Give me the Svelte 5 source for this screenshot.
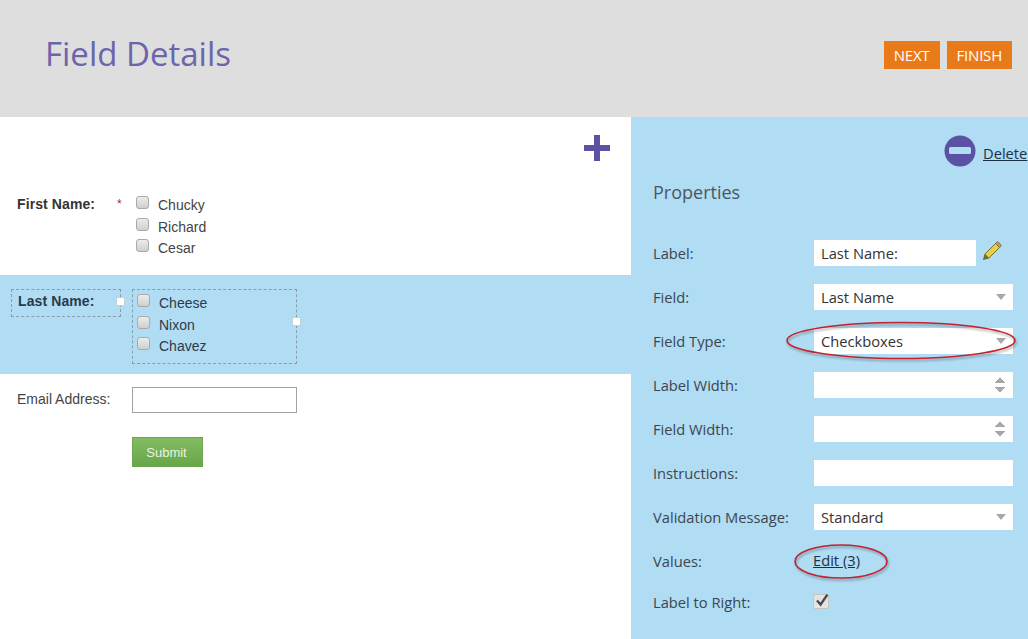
<script>
  const firstNames = ["Chucky", "Richard", "Cesar"];
  const lastNames = ["Cheese", "Nixon", "Chavez"];
</script>

<div class="page">
  <header class="top">
    <h1>Field Details</h1>
    <div class="actions">
      <button class="orange">NEXT</button>
      <button class="orange">FINISH</button>
    </div>
  </header>

  <div class="main">
    <section class="canvas">
      <div class="tools">
        <svg width="26" height="26" viewBox="0 0 26 26"><path d="M10 0h6v10h10v6H16v10h-6V16H0v-6h10z" fill="#5b52a3" /></svg>
      </div>

      <div class="row first">
        <div class="lbl bold">First Name:</div>
        <div class="req">*</div>
        <div class="opts">
          {#each firstNames as n}
            <div class="opt"><span class="cb"></span><span>{n}</span></div>
          {/each}
        </div>
      </div>

      <div class="row selected">
        <div class="lbl-box bold">Last Name:<span class="handle h-label"></span></div>
        <div class="opts-box">
          {#each lastNames as n}
            <div class="opt"><span class="cb"></span><span>{n}</span></div>
          {/each}
          <span class="handle h-field"></span>
        </div>
      </div>

      <div class="row email">
        <div class="lbl">Email Address:</div>
        <div class="email-input"></div>
      </div>

      <div class="submit-row">
        <button class="submit">Submit</button>
      </div>
    </section>

    <aside class="props">
      <div class="del">
        <svg width="32" height="32" viewBox="0 0 32 32"><circle cx="16" cy="16" r="15.5" fill="#5b52a3" /><rect x="5" y="12" width="22" height="7" rx="1.5" fill="#b0dcf4" /></svg>
        <a href="#del">Delete</a>
      </div>
      <h2>Properties</h2>

      <div class="form">
        <div class="prop">
          <span class="name">Label:</span>
          <div class="box short">Last Name:</div>
          <svg class="pencil" width="20" height="20" viewBox="0 0 20 20">
            <path d="M1.5 18.5l1.6-5.6L13.6 2.4l4 4L7.1 16.9z" fill="#e8cf4a" stroke="#77702c" stroke-width="1" />
            <path d="M13.6 2.4l1.3-1.2c.5-.4 1-.4 1.4 0l2.5 2.5c.4.4.4.9 0 1.4l-1.2 1.3z" fill="#e58f8a" stroke="#77702c" stroke-width="1" />
            <path d="M1.5 18.5l1.6-5.6 4 4z" fill="#6b6a3c" />
          </svg>
        </div>
        <div class="prop">
          <span class="name">Field:</span>
          <div class="box wide">Last Name<span class="caret"></span></div>
        </div>
        <div class="prop">
          <span class="name">Field Type:</span>
          <div class="box wide">Checkboxes<span class="caret"></span></div>
        </div>
        <div class="prop">
          <span class="name">Label Width:</span>
          <div class="box wide"><span class="spin"></span></div>
        </div>
        <div class="prop">
          <span class="name">Field Width:</span>
          <div class="box wide"><span class="spin"></span></div>
        </div>
        <div class="prop">
          <span class="name">Instructions:</span>
          <div class="box wide"></div>
        </div>
        <div class="prop">
          <span class="name">Validation Message:</span>
          <div class="box wide">Standard<span class="caret"></span></div>
        </div>
        <div class="prop">
          <span class="name">Values:</span>
          <a class="edit" href="#edit">Edit (3)</a>
        </div>
        <div class="prop last">
          <span class="name">Label to Right:</span>
          <span class="check">
            <svg width="16" height="16" viewBox="0 0 16 16"><path d="M3 7.500l3.600 4L13.400 1.600" fill="none" stroke="#4a4a4a" stroke-width="2.400" /></svg>
          </span>
        </div>
      </div>

      <!-- red hand drawn rings -->
      <svg class="rings" width="397" height="522" viewBox="0 0 397 522">
        <g fill="none" stroke="#c4222f" stroke-width="1.600">
          <ellipse cx="270" cy="223.500" rx="114" ry="18" class="ring" />
          <ellipse cx="210" cy="444.500" rx="46" ry="16.500" class="ring" />
        </g>
      </svg>
    </aside>
  </div>
</div>

<style>
  :global(body) {
    margin: 0;
    background: #fff;
  }
  .page {
    width: 1028px;
    height: 639px;
    overflow: hidden;
    font-family: "Liberation Sans", Arial, sans-serif;
  }
  .top {
    height: 117px;
    box-sizing: border-box;
    background: #dedede;
    display: flex;
    justify-content: space-between;
    padding: 32px 16px 0 45px;
  }
  h1 {
    margin: 0;
    font: 400 33px/44px "Open Sans", sans-serif;
    color: #6b66ac;
  }
  .actions {
    display: flex;
    gap: 7px;
    padding-top: 9px;
  }
  .orange {
    height: 28px;
    padding: 0 10px;
    border: 0;
    background: #e97a1a;
    color: #fff;
    font: 400 15px "Open Sans", sans-serif;
    letter-spacing: -0.2px;
  }
  .main {
    display: flex;
    height: 522px;
  }
  .canvas {
    width: 631px;
    color: #444;
    font-size: 14px;
  }
  .tools {
    display: flex;
    justify-content: flex-end;
    padding: 18px 21px 0 0;
    height: 44px;
  }
  .row {
    display: flex;
  }
  .first {
    height: 97px;
    padding: 16px 0 0 17px;
    box-sizing: border-box;
  }
  .lbl {
    line-height: 18px;
  }
  .bold {
    font-weight: 700;
    color: #333;
    letter-spacing: 0.1px;
  }
  .first .lbl {
    width: 100px;
  }
  .req {
    width: 19px;
    color: #a03030;
    font-size: 12px;
    line-height: 18px;
  }
  .opts {
    margin-top: -1px;
  }
  .opt {
    display: flex;
    height: 21.500px;
    align-items: flex-start;
    gap: 9px;
    line-height: 22px;
  }
  .cb {
    width: 11px;
    height: 11px;
    margin-top: 2px;
    border: 1px solid #aaa;
    border-radius: 3px;
    background: linear-gradient(#ececec, #cfcfcf);
  }
  .selected {
    height: 99px;
    margin-top: -1px;
    background: #b0dcf4;
    padding: 14px 0 0 11px;
    box-sizing: border-box;
    color: #2e3a4a;
  }
  .lbl-box {
    position: relative;
    width: 110px;
    height: 28px;
    border: 1px dashed #8b9cab;
    box-sizing: border-box;
    padding: 2px 0 0 6px;
    line-height: 18px;
    color: #2a3a4c;
  }
  .opts-box {
    position: relative;
    width: 165px;
    height: 75px;
    margin-left: 11px;
    border: 1px dashed #8b9cab;
    box-sizing: border-box;
    padding: 2px 0 0 4px;
  }
  .handle {
    position: absolute;
    width: 7px;
    height: 7px;
    background: #fff;
    border: 1px solid #c4d2dc;
  }
  .h-label {
    right: -5px;
    top: 7px;
  }
  .h-field {
    right: -5px;
    top: 27px;
  }
  .email {
    padding: 13px 0 0 17px;
  }
  .email .lbl {
    width: 115px;
    line-height: 24px;
  }
  .email-input {
    width: 165px;
    height: 26px;
    box-sizing: border-box;
    border: 1px solid #a3a3a3;
    background: #fff;
  }
  .submit-row {
    padding: 24px 0 0 132px;
  }
  .submit {
    width: 71px;
    height: 30px;
    border: 1px solid #6ea550;
    background: linear-gradient(#82bd62, #69a549);
    color: #e8f4e0;
    font: 13px "Liberation Sans", Arial, sans-serif;
    padding: 0 2px 0 0;
  }
  .props {
    position: relative;
    flex: 1;
    background: #b0dcf4;
    font-family: "Open Sans", sans-serif;
    font-size: 14.700px;
    color: #3d4650;
  }
  .del {
    display: flex;
    align-items: center;
    gap: 7px;
    padding: 18px 0 0 313px;
    white-space: nowrap;
  }
  .del a,
  .edit {
    color: #1d3144;
    text-decoration: underline;
  }
  .del a {
    padding-top: 4px;
  }
  h2 {
    margin: 0;
    padding: 12px 0 0 22px;
    font: 400 18px/26px "Open Sans", sans-serif;
    color: #4d5660;
  }
  .form {
    display: flex;
    flex-direction: column;
    gap: 18px;
    padding: 35px 0 0 22px;
  }
  .prop {
    display: flex;
    align-items: center;
    height: 26px;
  }
  .last {
    margin-top: -3px;
  }
  .name {
    width: 161px;
    flex: none;
  }
  .box {
    position: relative;
    height: 26px;
    background: #fff;
    box-sizing: border-box;
    padding-left: 7px;
    line-height: 26px;
    color: #333;
  }
  .short {
    width: 162px;
  }
  .wide {
    width: 199px;
  }
  .pencil {
    margin: -4px 0 0 6px;
  }
  .caret {
    position: absolute;
    right: 7px;
    top: 10px;
    border-left: 5px solid transparent;
    border-right: 5px solid transparent;
    border-top: 6px solid #a8a8a8;
  }
  .spin {
    position: absolute;
    right: 8px;
    top: 5px;
    width: 10px;
    height: 16px;
    background:
      linear-gradient(to bottom right, transparent 49%, #a8a8a8 50%) left top / 5px 6px no-repeat,
      linear-gradient(to bottom left, transparent 49%, #a8a8a8 50%) right top / 5px 6px no-repeat,
      linear-gradient(to top right, transparent 49%, #a8a8a8 50%) left bottom / 5px 6px no-repeat,
      linear-gradient(to top left, transparent 49%, #a8a8a8 50%) right bottom / 5px 6px no-repeat;
  }
  .edit {
    margin: -3px 0 0 -1px;
  }
  .check {
    width: 14px;
    height: 13px;
    margin-top: -1px;
    margin-left: -1px;
    background: #e4e4e4;
    border-radius: 2px;
    border: 1px solid #c5c5c5;
    position: relative;
  }
  .check svg {
    position: absolute;
    left: 0;
    top: -2px;
  }
  .rings {
    position: absolute;
    left: 0;
    top: 0;
    pointer-events: none;
  }
  .ring {
    filter: drop-shadow(1px 2px 1px rgba(60, 60, 60, 0.45));
  }
</style>
